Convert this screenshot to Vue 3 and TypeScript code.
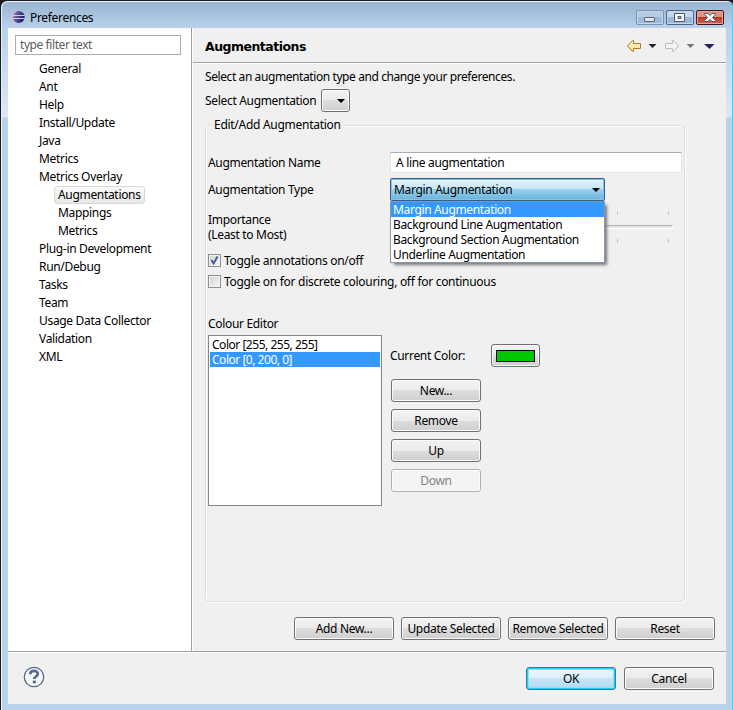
<script setup lang="ts">
import { ref } from 'vue'

interface TreeItem {
  label: string
  child?: boolean
}

const tree: TreeItem[] = [
  { label: 'General' },
  { label: 'Ant' },
  { label: 'Help' },
  { label: 'Install/Update' },
  { label: 'Java' },
  { label: 'Metrics' },
  { label: 'Metrics Overlay' },
  { label: 'Augmentations', child: true },
  { label: 'Mappings', child: true },
  { label: 'Metrics', child: true },
  { label: 'Plug-in Development' },
  { label: 'Run/Debug' },
  { label: 'Tasks' },
  { label: 'Team' },
  { label: 'Usage Data Collector' },
  { label: 'Validation' },
  { label: 'XML' },
]
const selectedPage = ref(7)

const types: string[] = [
  'Margin Augmentation',
  'Background Line Augmentation',
  'Background Section Augmentation',
  'Underline Augmentation',
]
const selectedType = ref(0)

const colors: string[] = ['Color [255, 255, 255]', 'Color [0, 200, 0]']
const selectedColor = ref(1)

const actions: string[] = ['Add New...', 'Update Selected', 'Remove Selected', 'Reset']
</script>

<template>
  <div class="window">
    <div class="titlebar">
      <svg class="logo" width="14" height="14" viewBox="0 0 14 14">
        <defs>
          <linearGradient id="orb" x1="0" y1="0" x2="1" y2="0.3">
            <stop offset="0" stop-color="#d9a5c8" />
            <stop offset="0.35" stop-color="#6a62a8" />
            <stop offset="1" stop-color="#201a62" />
          </linearGradient>
        </defs>
        <circle cx="6" cy="7" r="5.8" fill="#e3b9d2" />
        <circle cx="7.7" cy="7" r="6" fill="url(#orb)" />
        <path d="M2 5.500h11.600M1.800 8.500h11.800" stroke="#c5cbe8" stroke-width="1" />
      </svg>
      <span class="title">Preferences</span>
      <div class="controls">
        <span class="ctl">
          <svg width="26" height="13" viewBox="0 0 26 13">
            <rect x="7.500" y="6.500" width="10" height="4" rx="0.500" fill="#e4e4e4" stroke="#5b6575" />
          </svg>
        </span>
        <span class="ctl strong">
          <svg width="26" height="13" viewBox="0 0 26 13">
            <path d="M7.500 2.500h10v8h-10zM11 5.500v2h3v-2z" fill="#f6f6f6" fill-rule="evenodd" stroke="#4d576b" />
          </svg>
        </span>
        <span class="ctl close">
          <svg width="26" height="13" viewBox="0 0 26 13">
            <path d="M7.500 2.500h3.500l2 2 2-2h3.500v1l-3 3 3 3v1H15l-2-2-2 2H7.500v-1l3-3-3-3z" fill="#f6f6f6" stroke="#595468" />
          </svg>
        </span>
      </div>
    </div>

    <div class="client">
      <div class="upper">
        <aside class="sidebar">
          <div class="filter">type filter text</div>
          <ul class="tree">
            <li
              v-for="(item, i) in tree"
              :key="i"
              :class="{ child: item.child, selected: i === selectedPage }"
              @click="selectedPage = i"
            >
              <span>{{ item.label }}</span>
            </li>
          </ul>
        </aside>

        <main class="page">
          <header class="page-head">
            <h1>Augmentations</h1>
            <svg class="nav" width="90" height="14" viewBox="0 0 90 14">
              <defs>
                <linearGradient id="gold" x1="0" y1="0" x2="0" y2="1">
                  <stop offset="0" stop-color="#fffbe0" />
                  <stop offset="1" stop-color="#f8dc83" />
                </linearGradient>
              </defs>
              <path d="M1.500 7L6.500 1.500h1v3h7v5h-7v3h-1z" fill="url(#gold)" stroke="#b8791a" />
              <path d="M22.500 5h8L26.500 9z" fill="#222" />
              <path d="M52.500 7L47.500 1.500h-1v3h-7v5h7v3h1z" fill="#f4f4f0" stroke="#bdbdb8" />
              <path d="M60.500 5h8L64.500 9z" fill="#777" />
              <path d="M78 5h10.500L83.500 10z" fill="#26235c" />
            </svg>
          </header>

          <section class="page-body">
            <p class="message">Select an augmentation type and change your preferences.</p>
            <div class="select-row">
              <span class="t-select">Select Augmentation</span>
              <button class="btn mini"><i class="caret"></i></button>
            </div>

            <section class="group">
              <h2>Edit/Add Augmentation</h2>
              <div class="form">
                <label>Augmentation Name</label>
                <div class="text-input">A line augmentation</div>
                <label>Augmentation Type</label>
                <div class="combo">
                  <span>{{ types[selectedType] }}</span><i class="caret"></i>
                  <ul class="menu">
                    <li
                      v-for="(t, i) in types"
                      :key="t"
                      :class="{ active: i === selectedType }"
                      @click="selectedType = i"
                    >{{ t }}</li>
                  </ul>
                </div>
                <label class="importance">Importance<br />(Least to Most)</label>
                <div class="slider">
                  <div class="ticks"><i></i><i></i><i></i><i></i><i></i><i></i></div>
                  <div class="track"></div>
                  <div class="ticks"><i></i><i></i><i></i><i></i><i></i><i></i></div>
                </div>
              </div>

              <div class="check">
                <span class="box">
                  <svg width="11" height="11" viewBox="0 0 11 11">
                    <path d="M2.300 5l2.300 3.500L8.500 1.500" fill="none" stroke="#3f5a9b" stroke-width="1.900" />
                  </svg>
                </span>
                <span>Toggle annotations on/off</span>
              </div>
              <div class="check">
                <span class="box"></span>
                <span>Toggle on for discrete colouring, off for continuous</span>
              </div>

              <h3>Colour Editor</h3>
              <div class="editor">
                <ul class="color-list">
                  <li
                    v-for="(c, i) in colors"
                    :key="c"
                    :class="{ active: i === selectedColor }"
                    @click="selectedColor = i"
                  >{{ c }}</li>
                </ul>
                <div class="editor-side">
                  <div class="current">
                    <span>Current Color:</span>
                    <button class="btn swatch-btn"><i class="swatch"></i></button>
                  </div>
                  <button class="btn">New...</button>
                  <button class="btn">Remove</button>
                  <button class="btn">Up</button>
                  <button class="btn" disabled>Down</button>
                </div>
              </div>
            </section>

            <div class="actions">
              <button v-for="a in actions" :key="a" class="btn">{{ a }}</button>
            </div>
          </section>
        </main>
      </div>

      <footer class="footer">
        <svg class="help" width="22" height="22" viewBox="0 0 22 22">
          <circle cx="11" cy="11" r="9.700" fill="#f7f8fa" stroke="#596b8b" stroke-width="1.300" />
          <path d="M7.200 8.200C7.200 3.800 14.800 3.800 14.800 8c0 2.500-3.600 2.500-3.600 5" fill="none" stroke="#566a92" stroke-width="2.700" />
          <rect x="9.800" y="14.600" width="3" height="2.700" fill="#566a92" />
        </svg>
        <div class="dialog-buttons">
          <button class="btn default">OK</button>
          <button class="btn">Cancel</button>
        </div>
      </footer>
    </div>
  </div>
</template>

<style>
body {
  background: #1a1a1a;
  overflow: hidden;
}
</style>

<style scoped>
* {
  box-sizing: border-box;
}
.window {
  width: 733px;
  height: 710px;
  border: solid #1c1c1c;
  border-width: 1px 0 0 1px;
  border-radius: 7px 6px 0 0;
  box-shadow: inset 1px 1px 0 #e4f0fb, inset -1px 0 0 #45d3ee;
  background: linear-gradient(#98b3d1 0, #b9d1ea 27px, #dce8f6 116px, #b9d1ea 117px);
  font: 12px/15px "Noto Sans", "Open Sans", sans-serif;
  letter-spacing: -0.32px;
  color: #000;
  padding: 0 7px 6px;
  display: flex;
  flex-direction: column;
}
h1,
h2,
h3,
p,
ul {
  margin: 0;
  padding: 0;
  font: inherit;
  list-style: none;
}
.titlebar {
  height: 27px;
  flex: none;
  display: flex;
  align-items: center;
  padding: 5px 2px 0 3px;
}
.title {
  margin-left: 5px;
}
.controls {
  margin-left: auto;
  display: flex;
  gap: 2px;
  margin-top: 1px;
}
.ctl {
  width: 28px;
  height: 15px;
  border: 1px solid #7991b0;
  border-radius: 2px;
  box-shadow: inset 0 0 0 1px #c4d8ec;
  background: linear-gradient(#b5cce4 50%, #9fbad8 50%);
  display: flex;
}
.ctl.strong {
  border-color: #506381;
  background: linear-gradient(#c3d7eb 50%, #9ab7d7 50%);
}
.ctl.close {
  border-color: #48141c;
  box-shadow: inset 0 0 0 1px #e1a79d;
  background: linear-gradient(#dc9487 45%, #b93822 50%, #cc6548);
}
.client {
  flex: 1;
  display: flex;
  flex-direction: column;
  background: #f0f0f0;
}
.upper {
  height: 623px;
  display: flex;
}
.sidebar {
  width: 184px;
  border-right: 1px solid #a0a0a0;
  background: #fff;
  padding: 7px;
}
.filter {
  width: 166px;
  height: 20px;
  border: 1px solid #abadb3;
  padding: 1px 4px;
  letter-spacing: -0.42px;
  color: #5d5d5d;
}
.tree {
  margin-top: 5px;
}
.tree li {
  height: 18px;
  display: flex;
  padding-left: 20px;
}
.tree li.child {
  padding-left: 39px;
}
.tree span {
  border: 1px solid transparent;
  border-radius: 3px;
  line-height: 16px;
  padding: 0 3px;
}
.tree .selected span {
  border-color: #d9d9d9;
  background: linear-gradient(#fafafa, #e6e6e6);
}
.page {
  flex: 1;
  border-left: 1px solid #fff;
}
.page-head {
  height: 35px;
  border-bottom: 1px solid #a0a0a0;
  display: flex;
  align-items: center;
  justify-content: space-between;
  padding: 2px 10px 0 12px;
}
h1 {
  font: bold 12.5px/16px "DejaVu Sans", sans-serif;
  letter-spacing: -0.51px;
  margin-top: 1px;
}
.page-body {
  border-top: 1px solid #fff;
  padding: 5px 11px 0 12px;
}
.message {
  height: 20px;
  letter-spacing: -0.41px;
}
.select-row {
  height: 23px;
  display: flex;
  align-items: center;
}
.t-select {
  width: 116px;
  white-space: nowrap;
}
.btn {
  width: 90px;
  height: 23px;
  border: 1px solid #707070;
  border-radius: 3px;
  padding: 0 0 1px;
  box-shadow: inset 0 0 0 1px #fbfbfb;
  background: linear-gradient(#f2f2f2, #ebebeb 50%, #dddddd 50%, #cfcfcf);
  font: inherit;
  letter-spacing: inherit;
  color: #000;
  white-space: nowrap;
}
.btn:disabled {
  border-color: #adb2b5;
  background: #f4f4f4;
  color: #838383;
}
.btn.default {
  border-color: #2c80b0;
  box-shadow: inset 0 0 0 1px #25c9f5, inset 0 0 0 2px #8ce2fa;
  background: linear-gradient(#eaf5fb, #dceff9 50%, #c5e5f7 50%, #b3daf0);
}
.btn.mini {
  width: 29px;
  display: flex;
  align-items: center;
  justify-content: flex-end;
  padding: 1px 4px 0 0;
}
.caret {
  border: solid transparent;
  border-top-color: #000;
  border-width: 4px 4px 0;
}
.group {
  width: 480px;
  height: 477px;
  margin-top: 13px;
  border: 1px solid #d5dfe5;
  border-radius: 4px;
  box-shadow: inset 1px 1px 0 #fff, 1px 1px 0 #fff;
  padding-left: 2px;
}
h2 {
  width: max-content;
  margin: -9px 0 0 3px;
  padding: 0 3px;
  background: #f0f0f0;
  height: 15px;
  letter-spacing: -0.28px;
}
.form {
  margin-top: 20px;
  display: grid;
  grid-template-columns: 182px 292px;
  grid-template-rows: 22px 23px;
  row-gap: 4px;
  align-items: center;
}
.form > label:first-child {
  margin-top: -1px;
}
.text-input {
  height: 21px;
  align-self: start;
  border: 1px solid #e2e3ea;
  border-top-color: #abadb3;
  background: #fff;
  padding: 2px 5px;
}
.combo {
  position: relative;
  width: 215px;
  height: 23px;
  border: 1px solid #2c628b;
  border-radius: 2px;
  box-shadow: inset 0 0 0 1px #8fc0dc;
  background: linear-gradient(#e5f4fc, #c4e5f6 50%, #98d1ef 50%, #68b3db);
  display: flex;
  align-items: center;
  justify-content: space-between;
  padding: 0 4px 0 3px;
}
.menu {
  position: absolute;
  top: 22px;
  left: -1px;
  width: 215px;
  border: 1px solid #8795b0;
  background: #fff;
  box-shadow: 3px 3px 3px -1px #777;
  letter-spacing: -0.35px;
  z-index: 2;
}
.menu li {
  padding-left: 2px;
  height: 15px;
}
.menu .active,
.color-list .active {
  background: #3399ff;
  color: #fff;
}
.importance {
  margin-top: 6px;
}
.slider {
  width: 283px;
  margin-top: 6px;
}
.ticks {
  display: flex;
  justify-content: space-between;
  padding: 0 4px 0 23px;
}
.ticks i {
  width: 1px;
  height: 4px;
  background: #c4c4c4;
}
.track {
  height: 4px;
  margin: 10px 0;
  border: 1px solid #fff;
  border-top-color: #b0b0b0;
  border-left: 0;
  background: #e3e8e6;
}
.check {
  height: 21px;
  display: flex;
  align-items: center;
  gap: 3px;
  letter-spacing: -0.29px;
}
.form + .check {
  margin-top: 7px;
}
.box {
  width: 13px;
  height: 13px;
  border: 1px solid #8e8f8f;
  background: linear-gradient(135deg, #cfd1d4, #f6f6f6);
  box-shadow: inset 0 0 0 1px #f4f4f4;
  display: flex;
}
h3 {
  margin-top: 24px;
  height: 15px;
}
.editor {
  margin-top: 4px;
  display: flex;
}
.color-list {
  width: 174px;
  height: 171px;
  border: 1px solid #828790;
  background: #fff;
  padding: 1px;
  letter-spacing: -0.48px;
}
.color-list li {
  height: 15px;
  padding-left: 2px;
}
.editor-side {
  padding: 9px 0 0 9px;
  display: flex;
  flex-direction: column;
  gap: 7px;
}
.current {
  display: flex;
  align-items: center;
  margin: 0 0 5px -1px;
}
.current span {
  width: 101px;
}
.swatch-btn {
  width: 49px;
  display: flex;
  align-items: center;
  justify-content: center;
  padding: 0;
}
.swatch {
  width: 39px;
  height: 12px;
  background: #00c800;
  border: 1px solid #000;
}
.actions {
  margin-top: 15px;
  display: flex;
  justify-content: flex-end;
  gap: 7px;
}
.actions .btn {
  width: 100px;
}
.footer {
  flex: 1;
  border-top: 1px solid #a0a0a0;
  box-shadow: inset 0 1px 0 #fff;
  display: flex;
  align-items: center;
  justify-content: space-between;
  padding: 0 12px 0 15px;
}
.help {
  margin-bottom: 2px;
}
.dialog-buttons {
  display: flex;
  gap: 8px;
  margin-top: 1px;
}
</style>
